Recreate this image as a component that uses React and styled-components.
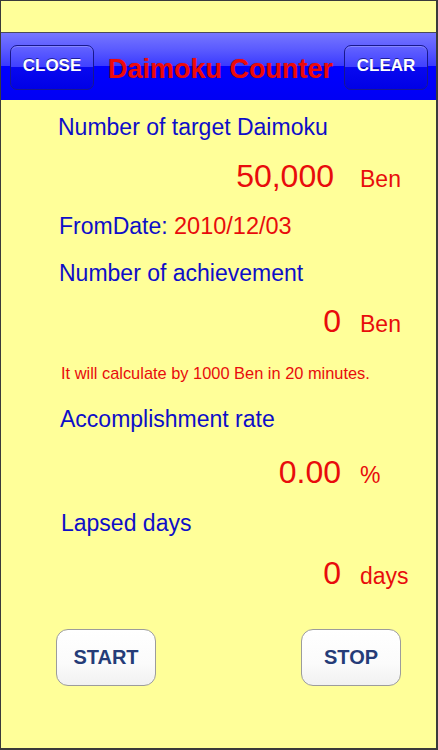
import React from "react";
import styled, { createGlobalStyle } from "styled-components";

const Global = createGlobalStyle`
  html, body { margin: 0; padding: 0; background: #ffff99; }
  * { box-sizing: border-box; }
`;

const Screen = styled.div`
  width: 438px;
  height: 750px;
  background: #ffff99;
  border-style: solid;
  border-color: #3a3a3a;
  border-width: 1px 2px 2px 1px;
  font-family: "Liberation Sans", Arial, sans-serif;
  display: flex;
  flex-direction: column;
  overflow: hidden;
`;

const StatusStrip = styled.div`
  height: 31px;
  flex: none;
`;

const NavBar = styled.div`
  height: 68px;
  flex: none;
  border-top: 1px solid #4a4a5a;
  background: linear-gradient(
    to bottom,
    #7676ff 0%,
    #5a5aff 25%,
    #3a3aff 49%,
    #0000ff 50%,
    #0000f4 100%
  );
  display: flex;
  align-items: center;
  padding: 2px 8px 0 9px;
`;

const NavButton = styled.button`
  width: 84px;
  height: 45px;
  border-radius: 7px;
  border: 1px solid #18188c;
  background: linear-gradient(
    to bottom,
    #6464ff 0%,
    #4040ff 49%,
    #0808f0 50%,
    #0000e6 100%
  );
  box-shadow: inset 0 1px 0 rgba(160, 160, 255, 0.6);
  color: #ffffff;
  font-family: "Liberation Sans", Arial, sans-serif;
  font-weight: bold;
  font-size: 17px;
  text-shadow: 0 -1px 0 rgba(0, 0, 80, 0.6);
  padding: 0 0 3px 0;
  flex: none;
`;

const Title = styled.div`
  flex: 1;
  text-align: center;
  color: #ee0a0a;
  font-weight: bold;
  font-size: 27px;
  line-height: 30px;
  padding-top: 2px;
  padding-left: 3px;
  text-shadow: 0 0 1px rgba(120, 0, 0, 0.5);
`;

const Content = styled.div`
  display: flex;
  flex-direction: column;
`;

const Label = styled.div`
  margin-top: ${(p) => p.$mt}px;
  padding-left: ${(p) => p.$pl || 57}px;
  height: 30px;
  line-height: 30px;
  font-size: 23px;
  color: #0e0ec8;
  white-space: nowrap;
`;

const DateValue = styled.span`
  color: #e80c0c;
  font-size: 23.5px;
`;

const ValueRow = styled.div`
  margin-top: ${(p) => p.$mt}px;
  height: 40px;
  line-height: 40px;
  display: flex;
  align-items: baseline;
  color: #e80c0c;
  white-space: nowrap;
`;

const BigNumber = styled.span`
  width: 340px;
  padding-right: ${(p) => p.$pr || 0}px;
  text-align: right;
  font-size: 32px;
  flex: none;
`;

const Unit = styled.span`
  margin-left: 19px;
  font-size: 23px;
`;

const Note = styled.div`
  margin-top: ${(p) => p.$mt}px;
  padding-left: 60px;
  height: 20px;
  line-height: 20px;
  font-size: 16.4px;
  color: #e80c0c;
  white-space: nowrap;
`;

const ButtonRow = styled.div`
  margin-top: 36px;
  display: flex;
  justify-content: space-between;
  padding: 0 35px 0 55px;
`;

const ActionButton = styled.button`
  width: 100px;
  height: 57px;
  border-radius: 12px;
  border: 1px solid #9c9c9c;
  background: linear-gradient(to bottom, #ffffff 0%, #fbfbfb 60%, #f1f1f1 100%);
  color: #253c78;
  font-family: "Liberation Sans", Arial, sans-serif;
  font-weight: bold;
  font-size: 20px;
  padding: 0;
`;

export default function App() {
  return (
    <>
      <Global />
      <Screen>
        <StatusStrip />
        <NavBar>
          <NavButton>CLOSE</NavButton>
          <Title>Daimoku Counter</Title>
          <NavButton>CLEAR</NavButton>
        </NavBar>
        <Content>
          <Label $mt={12}>Number of target Daimoku</Label>
          <ValueRow $mt={14}>
            <BigNumber $pr={7}>50,000</BigNumber>
            <Unit>Ben</Unit>
          </ValueRow>
          <Label $mt={15} $pl={58}>
            FromDate: <DateValue>2010/12/03</DateValue>
          </Label>
          <Label $mt={17} $pl={58}>Number of achievement</Label>
          <ValueRow $mt={13}>
            <BigNumber>0</BigNumber>
            <Unit>Ben</Unit>
          </ValueRow>
          <Note $mt={22}>It will calculate by 1000 Ben in 20 minutes.</Note>
          <Label $mt={21} $pl={59}>Accomplishment rate</Label>
          <ValueRow $mt={18}>
            <BigNumber>0.00</BigNumber>
            <Unit>%</Unit>
          </ValueRow>
          <Label $mt={16} $pl={60}>Lapsed days</Label>
          <ValueRow $mt={15}>
            <BigNumber $pr={-1}>0</BigNumber>
            <Unit>days</Unit>
          </ValueRow>
          <ButtonRow>
            <ActionButton>START</ActionButton>
            <ActionButton>STOP</ActionButton>
          </ButtonRow>
        </Content>
      </Screen>
    </>
  );
}
